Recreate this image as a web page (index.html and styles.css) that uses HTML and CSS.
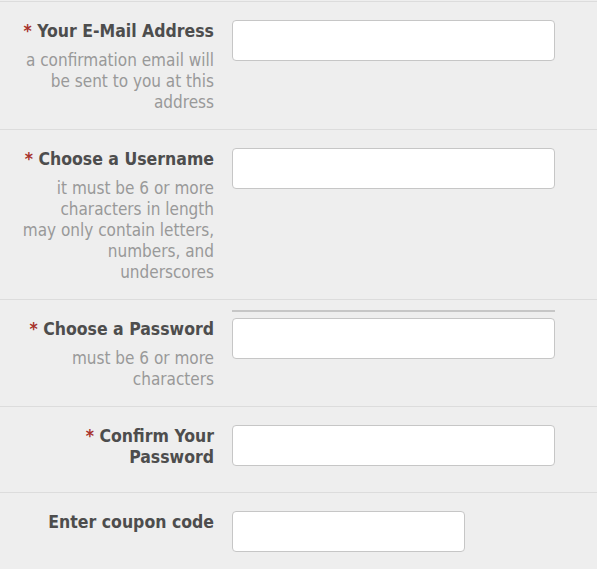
FILE: index.html
```html
<!DOCTYPE html>
<html>
<head>
<meta charset="utf-8">
<title>Register</title>
<link rel="stylesheet" href="styles.css">
</head>
<body>
<form class="form">
  <div class="row">
    <div class="label-col">
      <label class="label"><span class="req">*</span> Your E-Mail Address</label>
      <div class="help">a confirmation email will be sent to you at this address</div>
    </div>
    <div class="field-col"><input class="input" type="text"></div>
  </div>
  <div class="row">
    <div class="label-col">
      <label class="label"><span class="req">*</span> Choose a Username</label>
      <div class="help">it must be 6 or more characters in length<br>may only contain letters, numbers, and underscores</div>
    </div>
    <div class="field-col"><input class="input" type="text"></div>
  </div>
  <div class="row">
    <div class="label-col">
      <label class="label"><span class="req">*</span> Choose a Password</label>
      <div class="help">must be 6 or more characters</div>
    </div>
    <div class="field-col field-pw"><div class="meter"></div><input class="input" type="password"></div>
  </div>
  <div class="row">
    <div class="label-col">
      <label class="label"><span class="req">*</span> Confirm Your Password</label>
    </div>
    <div class="field-col"><input class="input" type="password"></div>
  </div>
  <div class="row">
    <div class="label-col">
      <label class="label">Enter coupon code</label>
    </div>
    <div class="field-col"><input class="input input-short" type="text"></div>
  </div>
</form>
</body>
</html>
```

FILE: styles.css
```css
html, body {
  margin: 0;
  padding: 0;
  background: #eeeeee;
}
body {
  font-family: "DejaVu Sans", Verdana, sans-serif;
  font-stretch: condensed;
  font-size: 17px;
  line-height: 21px;
  color: #555555;
}
.form {
  padding-top: 1px;
}
.row {
  display: grid;
  grid-template-columns: 214px 323px;
  column-gap: 18px;
  border-top: 1px solid #dcdcdc;
  padding: 18px 0 16px;
}
.label-col {
  padding-left: 16px;
  padding-top: 1px;
  text-align: right;
}
.label {
  display: block;
  font-size: 17.5px;
  font-weight: bold;
  color: #4d4d4d;
}
.req {
  color: #a8332c;
}
.help {
  margin-top: 8px;
  color: #999999;
}
.field-col {
  position: relative;
}
.input {
  display: block;
  box-sizing: border-box;
  width: 323px;
  height: 41px;
  margin: 0 0 10px;
  padding: 0 8px;
  background: #ffffff;
  border: 1px solid #c6c6c6;
  border-radius: 4px;
  font: inherit;
}
.input-short {
  width: 233px;
}
.meter {
  position: absolute;
  left: 0;
  right: 0;
  top: -8px;
  height: 2px;
  background: #c6c6c6;
}
```
